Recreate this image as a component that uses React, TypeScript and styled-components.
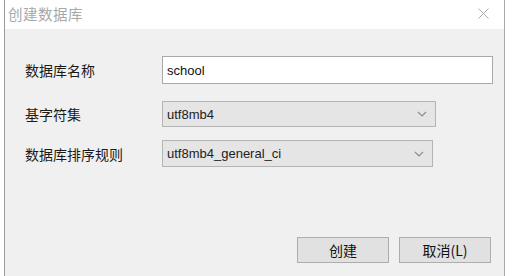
import React from "react";
import styled, { createGlobalStyle } from "styled-components";

const Global = createGlobalStyle`
  html, body { margin: 0; padding: 0; background: #ffffff; }
  body { font-family: "Liberation Sans", "Noto Sans CJK SC", sans-serif; }
  #root { width: 514px; height: 276px; overflow: hidden; }
`;

const Page = styled.div`
  display: flex;
  width: 514px;
  height: 276px;
  background: #ffffff;
`;

const Window = styled.div`
  margin-left: 4px;
  width: 499px;
  height: 276px;
  border-left: 1px solid #9a9a9a;
  border-right: 1px solid #a8a8a8;
  display: flex;
  flex-direction: column;
`;

const TitleBar = styled.div`
  height: 29px;
  flex: none;
  background: #ffffff;
  display: flex;
  align-items: center;
  justify-content: space-between;
  padding: 0 15px 0 3px;
`;

const Title = styled.div`
  font-family: "Noto Sans CJK SC", sans-serif;
  font-size: 14.5px;
  color: #a8a8a8;
  letter-spacing: 0.5px;
  margin-top: -2px;
`;

const Close = styled.svg`
  width: 11px;
  height: 11px;
  margin-top: -3px;
`;

const Body = styled.div`
  flex: 1;
  background: #f0f0f0;
  display: flex;
  flex-direction: column;
`;

const Form = styled.div`
  display: grid;
  grid-template-columns: 137px 1fr;
  grid-template-rows: 28px 43px 40px;
  align-items: end;
  padding: 27px 11px 0 20px;
`;

const Label = styled.div<{ $h: number }>`
  font-family: "Noto Sans CJK SC", sans-serif;
  font-size: 14px;
  color: #1a1a1a;
  height: ${(p) => p.$h}px;
  display: flex;
  align-items: center;
`;

const TextInput = styled.div`
  box-sizing: border-box;
  height: 28px;
  border: 1px solid #a9a9a9;
  background: #ffffff;
  font-size: 13px;
  color: #111;
  display: flex;
  align-items: center;
  padding-left: 4px;
`;

const Select = styled.div<{ $w: number; $h: number }>`
  box-sizing: border-box;
  width: ${(p) => p.$w}px;
  height: ${(p) => p.$h}px;
  border: 1px solid #b4b4b4;
  background: #e5e5e5;
  font-size: 13px;
  color: #222;
  display: flex;
  align-items: center;
  justify-content: space-between;
  padding: 0 8px 0 4px;
`;

const Chevron = styled.svg`
  width: 10px;
  height: 6px;
`;

const Footer = styled.div`
  margin-top: auto;
  display: flex;
  justify-content: flex-end;
  gap: 10px;
  padding: 0 13px 13px 0;
`;

const Button = styled.div`
  box-sizing: border-box;
  width: 92px;
  height: 26px;
  border: 1px solid #adadad;
  background: #e1e1e1;
  font-family: "Noto Sans CJK SC", sans-serif;
  font-size: 14px;
  color: #111;
  display: flex;
  align-items: center;
  justify-content: center;
`;

const Row = styled.div`
  display: contents;
`;

const ChevronIcon = () => (
  <Chevron viewBox="0 0 10 6">
    <path d="M1 1 L5 5 L9 1" fill="none" stroke="#8a8a8a" strokeWidth="1.1" />
  </Chevron>
);

export default function App() {
  return (
    <>
      <Global />
      <Page>
        <Window>
          <TitleBar>
            <Title>创建数据库</Title>
            <Close viewBox="0 0 11 11">
              <path d="M0.5 0.5 L10.5 10.5 M10.5 0.5 L0.5 10.5" stroke="#ababab" strokeWidth="1" fill="none" />
            </Close>
          </TitleBar>
          <Body>
            <Form>
              <Row>
                <Label $h={28}>数据库名称</Label>
                <TextInput>school</TextInput>
              </Row>
              <Row>
                <Label $h={26}>基字符集</Label>
                <Select $w={274} $h={26}>
                  utf8mb4
                  <ChevronIcon />
                </Select>
              </Row>
              <Row>
                <Label $h={27}>数据库排序规则</Label>
                <Select $w={271} $h={27}>
                  utf8mb4_general_ci
                  <ChevronIcon />
                </Select>
              </Row>
            </Form>
            <Footer>
              <Button>创建</Button>
              <Button>取消(L)</Button>
            </Footer>
          </Body>
        </Window>
      </Page>
    </>
  );
}
